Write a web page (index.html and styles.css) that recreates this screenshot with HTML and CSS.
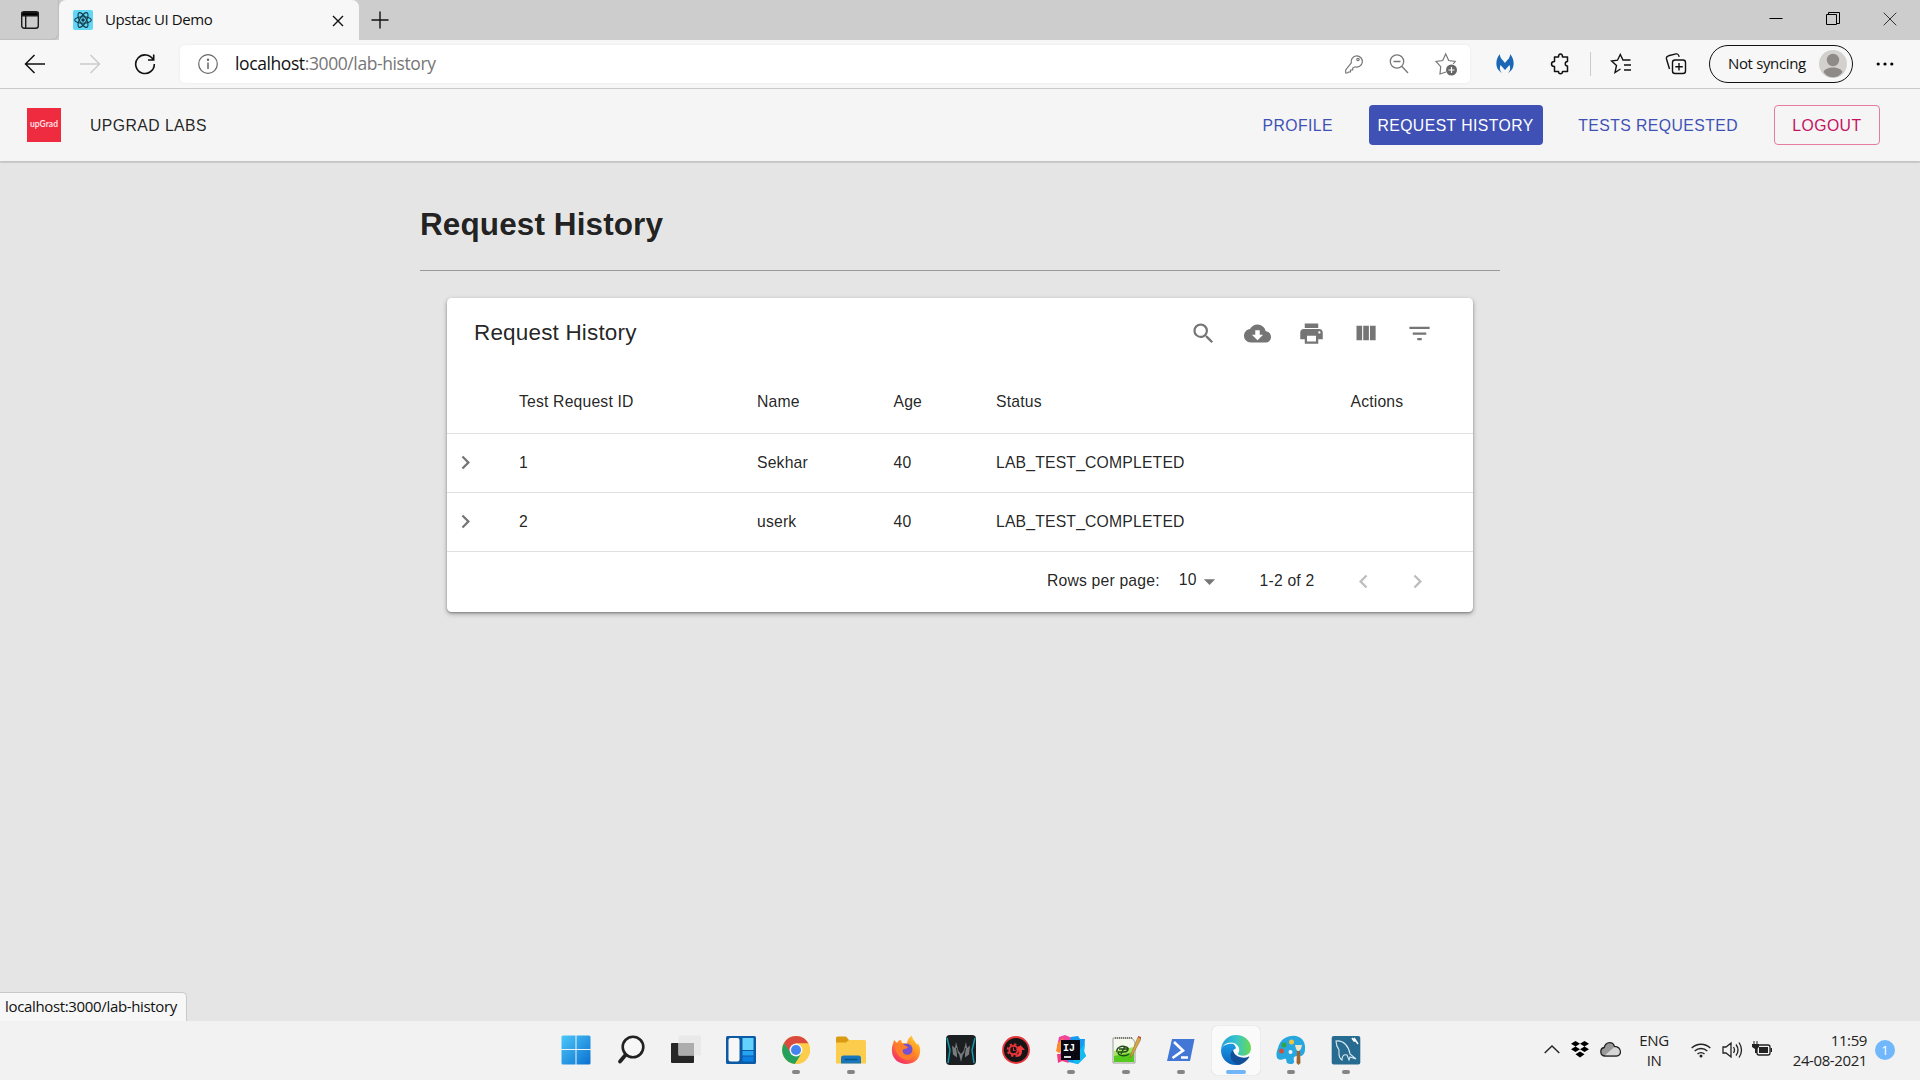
FILE: index.html
```html
<!DOCTYPE html>
<html lang="en">
<head>
<meta charset="utf-8">
<title>Upstac UI Demo</title>
<link rel="stylesheet" href="styles.css">
</head>
<body>
<div class="screen">
  <header class="tabbar">
    <div class="tab-actions"><svg width="20" height="20" viewBox="0 0 20 20" fill="none" stroke="#1b1b1b" stroke-width="1.4"><rect x="1.7" y="1.7" width="16.6" height="16.6" rx="2.5"/><path d="M2 2.5h16v3.2H2z" fill="#000"/><path d="M5.7 6v12"/></svg></div>
    <div class="tab">
      <svg class="favicon" width="20" height="20" viewBox="0 0 20 20" fill="none" stroke="#123846" stroke-width="1.1"><rect width="20" height="20" rx="2" fill="#61d6f5" stroke="none"/><ellipse cx="10" cy="10" rx="8.3" ry="3.3"/><ellipse cx="10" cy="10" rx="8.3" ry="3.3" transform="rotate(60 10 10)"/><ellipse cx="10" cy="10" rx="8.3" ry="3.3" transform="rotate(120 10 10)"/><circle cx="10" cy="10" r="1.7" fill="#123846" stroke="none"/></svg>
      <span class="tab-title">Upstac UI Demo</span>
      <svg class="tab-close" width="12" height="12" viewBox="0 0 12 12" stroke="#111" stroke-width="1.4"><path d="M1 1l10 10M11 1L1 11"/></svg>
    </div>
    <svg class="new-tab" width="18" height="18" viewBox="0 0 18 18" stroke="#111" stroke-width="1.4"><path d="M9 0.5v17M.5 9h17"/></svg>
    <div class="window-buttons">
      <svg width="14" height="14" viewBox="0 0 14 14" stroke="#000"><path d="M.5 6.500h13"/></svg>
      <svg width="14" height="14" viewBox="0 0 14 14" fill="none" stroke="#000"><path d="M.5 2.500h10v10H.5zM2.500 2.500v-2h11v11h-3"/></svg>
      <svg width="14" height="14" viewBox="0 0 14 14" stroke="#333"><path d="M.7.7l12.6 12.6M13.3.7L.7 13.3"/></svg>
    </div>
  </header>

  <div class="toolbar">
    <div class="nav-buttons">
      <svg width="22" height="20" viewBox="0 0 22 20" fill="none" stroke="#111" stroke-width="1.5"><path d="M21 10H1.5M10.5 1l-9 9 9 9"/></svg>
      <svg width="22" height="20" viewBox="0 0 22 20" fill="none" stroke="#ccc" stroke-width="1.5"><path d="M1 10h19.5M11.500 1l9 9-9 9"/></svg>
      <svg width="22" height="22" viewBox="0 0 22 22" fill="none" stroke="#111" stroke-width="1.6"><path d="M19.300 7A9.300 9.300 0 1 0 20.300 11M19.700 1.500V7h-5.700"/></svg>
    </div>
    <div class="address">
      <svg width="22" height="22" viewBox="0 0 22 22" fill="none" stroke="#666" stroke-width="1.2"><circle cx="11" cy="11" r="9.300"/><path d="M11 9.500v6.500" stroke-width="1.500"/><circle cx="11" cy="6.700" r=".6" fill="#666"/></svg>
      <span class="url"><span class="host">localhost</span>:3000/lab-history</span>
      <div class="address-icons">
        <svg width="20" height="22" viewBox="0 0 20 22" fill="none" stroke="#777" stroke-width="1.200"><path d="M7.300 9.800a5.600 5.600 0 1 1 3.600 4L8.700 15v2H6.500v2H4.500l-1 1H1.700v-3z"/><circle cx="14" cy="6.500" r="1.200"/></svg>
        <svg width="20" height="22" viewBox="0 0 20 22" fill="none" stroke="#777" stroke-width="1.300"><circle cx="8" cy="8.500" r="6.700"/><path d="M4.500 8.500h7M13 13.500l6 6.500"/></svg>
        <svg width="24" height="24" viewBox="0 0 24 24" fill="none" stroke="#777" stroke-width="1.200"><path d="M12 20l-6 2 .7-7.300L2 9.500l6.700-1L11.700 2l3 6.500 6.500 1-2 2.500"/><circle cx="17.500" cy="18" r="5.500" fill="#666" stroke="none"/><path d="M17.500 15v6M14.500 18h6" stroke="#fff"/></svg>
      </div>
    </div>
    <div class="extensions">
      <svg class="malwarebytes" width="18" height="20" viewBox="0 0 18 20" fill="#1b66b5"><path d="M4 0C3.500 4 7 6 9 9c2-3 5.500-5 5-9 4 4 5 12 1.500 16L12 19.500c2.500-3 2.500-5.500 1.500-8.500L9 16l-4.500-5c-1 3-1 5.500 1.500 8.500L2.500 16C-1 12 0 4 4 0z"/></svg>
      <svg class="puzzle" width="20" height="22" viewBox="0 0 20 22" fill="none" stroke="#111" stroke-width="1.500" stroke-linejoin="round"><path d="M4.500 4h4c0-4 4-4 4 0h5v4.500c-3 0-3 4.500 0 4.500v5.500h-5c0 3-4 3-4 0h-4v-5c-4 0-4-5 0-5z"/></svg>
      <span class="separator"></span>
      <svg class="favorites" width="22" height="22" viewBox="0 0 22 22" fill="none" stroke="#111" stroke-width="1.400"><path d="M10.500 16l-5.500 3.500 1.500-7L1.500 8l6-.8L10.300 1.500 13 7h7.500M14 12h7M14 17h7"/></svg>
      <svg class="collections" width="22" height="22" viewBox="0 0 22 22" fill="none" stroke="#111" stroke-width="1.400"><rect x="7.500" y="7" width="13" height="13.500" rx="2.500"/><path d="M14 10v7.500M10.300 13.800h7.500M4.500 16L1.500 6c-.5-2 .3-2.700 2-3.200L11 .9c2-.4 2.500.4 3.200 3"/></svg>
      <div class="profile-pill"><span>Not syncing</span><svg width="28" height="28" viewBox="0 0 28 28"><circle cx="14" cy="14" r="14" fill="#d3d1ce"/><circle cx="14" cy="10" r="6.200" fill="#8e8a87"/><path d="M4.500 22c2-6 17-6 19 0-4 7-15 7-19 0z" fill="#8e8a87"/></svg></div>
      <svg class="more" width="18" height="4" viewBox="0 0 18 4"><circle cx="2.200" cy="2" r="1.600"/><circle cx="9" cy="2" r="1.600"/><circle cx="15.800" cy="2" r="1.600"/></svg>
    </div>
  </div>

  <main class="page">
    <nav class="appbar">
      <div class="logo">upGrad</div>
      <span class="brand">UPGRAD LABS</span>
      <div class="menu">
        <a class="btn">PROFILE</a>
        <a class="btn btn-active">REQUEST HISTORY</a>
        <a class="btn">TESTS REQUESTED</a>
        <a class="btn btn-outline">LOGOUT</a>
      </div>
    </nav>
    <section class="content">
      <h1>Request History</h1>
      <div class="rule"></div>
      <div class="card">
        <div class="card-head">
          <h2>Request History</h2>
          <div class="tools">
            <svg viewBox="0 0 24 24"><path d="M15.500 14h-.79l-.28-.27A6.471 6.471 0 0 0 16 9.500 6.500 6.500 0 1 0 9.500 16c1.610 0 3.090-.59 4.230-1.570l.27.28v.79l5 4.990L20.490 19l-4.990-5zm-6 0C7.010 14 5 11.990 5 9.500S7.010 5 9.500 5 14 7.010 14 9.500 11.990 14 9.500 14z"/></svg>
            <svg viewBox="0 0 24 24"><path d="M19.350 10.040C18.670 6.590 15.640 4 12 4 9.110 4 6.600 5.640 5.350 8.040 2.340 8.360 0 10.910 0 14c0 3.310 2.690 6 6 6h13c2.760 0 5-2.240 5-5 0-2.640-2.050-4.780-4.650-4.960zM17 13l-5 5-5-5h3V9h4v4h3z"/></svg>
            <svg viewBox="0 0 24 24"><path d="M19 8H5c-1.660 0-3 1.340-3 3v6h4v4h12v-4h4v-6c0-1.660-1.340-3-3-3zm-3 11H8v-5h8v5zm3-7c-.55 0-1-.45-1-1s.45-1 1-1 1 .45 1 1-.45 1-1 1zm-1-9H6v4h12V3z"/></svg>
            <svg viewBox="0 0 24 24"><path d="M10 18h5V5h-5v13zm-6 0h5V5H4v13zM16 5v13h5V5h-5z"/></svg>
            <svg viewBox="0 0 24 24"><path d="M10 18h4v-2h-4v2zM3 6v2h18V6H3zm3 7h12v-2H6v2z"/></svg>
          </div>
        </div>
        <div class="row row-head"><span></span><span>Test Request ID</span><span>Name</span><span>Age</span><span>Status</span><span>Actions</span></div>
        <div class="row"><svg class="chevron" viewBox="0 0 24 24"><path d="M10 6L8.590 7.410 13.170 12l-4.580 4.590L10 18l6-6z"/></svg><span>1</span><span>Sekhar</span><span>40</span><span>LAB_TEST_COMPLETED</span><span></span></div>
        <div class="row"><svg class="chevron" viewBox="0 0 24 24"><path d="M10 6L8.590 7.410 13.170 12l-4.580 4.590L10 18l6-6z"/></svg><span>2</span><span>userk</span><span>40</span><span>LAB_TEST_COMPLETED</span><span></span></div>
        <div class="pager">
          <span>Rows per page:</span>
          <span class="page-size">10</span>
          <svg class="caret" viewBox="0 0 24 24"><path d="M7 10l5 5 5-5z"/></svg>
          <span class="range">1-2 of 2</span>
          <svg class="page-arrow" viewBox="0 0 24 24"><path d="M15.410 7.410L14 6l-6 6 6 6 1.410-1.410L10.830 12z"/></svg>
          <svg class="page-arrow" viewBox="0 0 24 24"><path d="M10 6L8.590 7.410 13.170 12l-4.580 4.590L10 18l6-6z"/></svg>
        </div>
      </div>
    </section>
    <div class="link-status">localhost:3000/lab-history</div>
  </main>

  <footer class="taskbar">
    <div class="apps">
      <div class="app"><svg viewBox="0 0 30 30"><defs><linearGradient id="win" gradientUnits="userSpaceOnUse" x1="0" y1="0" x2="30" y2="30"><stop offset="0" stop-color="#4cc9fa"/><stop offset="1" stop-color="#0a6fd0"/></linearGradient></defs><path fill="url(#win)" d="M2 .5h12.500V14H.5V2Q.5.5 2 .5zM15.500.5H28q1.500 0 1.500 1.500v12h-14zM.5 15h14v14.500H2Q.5 29.500.5 28zM15.500 15h14v13q0 1.500-1.500 1.500H15.500z"/></svg></div>
      <div class="app"><svg viewBox="0 0 30 30" fill="none" stroke="#222"><circle cx="17" cy="12" r="10.300" fill="#f7f7f7" stroke-width="2.600"/><path d="M9.500 20L4 26.500" stroke-width="3.800" stroke-linecap="round"/></svg></div>
      <div class="app"><svg viewBox="0 0 30 30"><rect y="8" width="23" height="20" rx="1" fill="#262626"/><rect x="7.500" y=".5" width="22.500" height="20" rx="1" fill="#e9e9e9"/><path d="M7.500 8H23v12.500H7.500z" fill="#adadad"/></svg></div>
      <div class="app"><svg viewBox="0 0 30 30"><rect y="1" width="30" height="28" rx="1.500" fill="#0c59a4"/><rect x="2.500" y="3" width="11" height="23.500" rx="2" fill="#f7f7f7"/><path d="M16.500 3h11v12h-11z" fill="#63d2fc"/><path d="M16.500 16h11v4.500h-11z" fill="#26a4f3"/><path d="M16.500 21.500h11v5h-11z" fill="#0c80e2"/></svg></div>
      <div class="app running"><svg viewBox="0 0 30 30"><circle cx="15" cy="15" r="14" fill="#fccd48"/><path d="M3 8a14 14 0 0 1 24.500.5H15L9 18.500z" fill="#db4a3e"/><path d="M3 8a14 14 0 0 0 11 21l6.500-10.500H10z" fill="#23a15d"/><path d="M15 8.500h12.300A14 14 0 0 1 14 29l7-11z" fill="#fccd48"/><circle cx="15" cy="15" r="6.500" fill="#f5f5f5"/><circle cx="15" cy="15" r="5" fill="#4384f0"/></svg></div>
      <div class="app running"><svg viewBox="0 0 30 30"><path d="M0 3q0-1.500 1.500-1.500H10L13 5v4H0z" fill="#d99b13"/><path d="M0 7.500h10L13 5h15.500Q30 5 30 6.500v22H0z" fill="#fccc4d"/><path d="M5 28.500V23q0-2.500 2.500-2.500h15Q25 20.500 25 23v5.500z" fill="#1978bd"/><path d="M8.500 24.500h13" stroke="#0b558d" stroke-width="1.500"/></svg></div>
      <div class="app"><svg viewBox="0 0 30 30"><defs><linearGradient id="fox" x1="1" y1="0" x2=".3" y2="1"><stop offset="0" stop-color="#ffdf3b"/><stop offset=".5" stop-color="#ff8d24"/><stop offset="1" stop-color="#f52d67"/></linearGradient></defs><path fill="url(#fox)" d="M2 9l1-4 3 3c1-2 2-3 4-3l1 3c2 0 4 0 5 1 0-4 2-7 5-8.500 0 4 3 5 5 9l1-1c2 3 2.500 6 2 9-1 8-7 11.500-14 11.500S1.500 24 1 17C.7 13 1 11 2 9z"/><circle cx="15.500" cy="14.500" r="6" fill="#7650ce"/><path d="M4 11c3-3 7-3 10-.5l3 1.500c-1 2-3 1.500-5 2.500-1 2 0 4 2 4.700 5 2 8-1 8-5.200 3 8-3 12-8 10.500S4 18 4 11z" fill="#ff7c2a"/></svg></div>
      <div class="app"><svg viewBox="0 0 30 30"><rect width="30" height="30" rx="4" fill="#1b1f22"/><path d="M1 3l3 12-2 13M29 3l-3 12 2 13" stroke="#139aac" stroke-width="1.500" fill="none"/><path d="M10 7l2.500 9 2.500 3 2.500-3L20 7l1 6 3-2.500-1 9-4 3v-5l-2 1.500-2 8-2-8-2-1.500v5l-4-3-1-9L9 13z" fill="#777b7e"/><path d="M10.500 13l1 6m8-6l-1 6" stroke="#222"/></svg></div>
      <div class="app"><svg viewBox="0 0 30 30"><circle cx="15" cy="15" r="13" fill="#161414" stroke="#e7363b" stroke-width="1.800"/><circle cx="12.500" cy="15" r="4.200" fill="none" stroke="#e83539" stroke-width="2"/><circle cx="12.500" cy="15" r="5.900" fill="none" stroke="#e83539" stroke-width="1.800" stroke-dasharray="2.300 2.330"/><path d="M14 22c6 0 7-2 7-7h3l-4.500-5-4.500 5h3c0 4-1 5-4 7z" fill="#ef3b3d"/><path d="M12.500 12.500v3h2" stroke="#e83539" fill="none"/></svg></div>
      <div class="app running"><svg viewBox="0 0 30 30"><path d="M3 2l6-2 7 3-4 20-10 3 3-10-4-4z" fill="#f2449d"/><path d="M2 8l5-5 2 10-6 5-3-2z" fill="#ff8b26"/><path d="M15 2l7-1 2 3 5 0-1 12 2 5-8 8-14-3z" fill="#149cf2"/><path d="M17 24l12-16-1 9 2 4-8 8-4-1z" fill="#12bbf0"/><path d="M1 19l7 0 5 9-7-2-4 2z" fill="#f33b83"/><path d="M5 5h19v20H5z" fill="#090812"/><path d="M8 22h7" stroke="#fff" stroke-width="1.700"/><text x="7" y="15.500" fill="#fff" font-family="Liberation Mono, monospace" font-weight="700" font-size="10">IJ</text></svg></div>
      <div class="app running"><svg viewBox="0 0 30 30"><path d="M2 3h19l3 4v21H2z" fill="#f5f8ed" stroke="#9aa093"/><path d="M3 16l20-4v15H3z" fill="#a3e65e"/><path d="M3 21l20-4v10H3z" fill="#55c91d"/><path d="M4 3h18" stroke="#777" stroke-width="2" stroke-dasharray="1 1"/><path d="M6 17c-1-4 4-7 9-5 4 1 2 5-2 5H7m0 0c0 4 7 5 11 2M8 14h9M14 11l-4 8" stroke="#244c18" stroke-width="1.400" fill="none"/><path d="M27 2l3 2-9 17-2 2 1-4z" fill="#dba444" stroke="#8c672b" stroke-width=".5"/><path d="M27 1l3 1v2l-3-2z" fill="#ba443e"/></svg></div>
      <div class="app running"><svg viewBox="0 0 30 30"><path d="M6 4h22.500L24 26H1z" fill="#4377d6"/><path d="M8 7l9 8.500L6.500 23M15 22.500h7" stroke="#fff" stroke-width="2.600" fill="none"/></svg></div>
      <div class="app current"><svg viewBox="0 0 24 24"><defs><linearGradient id="edgeTop"><stop stop-color="#229bdc"/><stop offset=".5" stop-color="#36c4cd"/><stop offset="1" stop-color="#69da4f"/></linearGradient><linearGradient id="edgeSide" x2="0" y2="1"><stop stop-color="#1a9be8"/><stop offset="1" stop-color="#0d63b8"/></linearGradient></defs><path fill="url(#edgeSide)" d="M8.500 7C4 7 .5 9 0 12c0 7 5 12 12 12 2 0 3-.3 4-.7C11 23 8 19 8.500 15c.2-2 1.300-3.500 3.500-4.500C11.500 8.500 10.500 7 8.500 7z"/><path fill="#124f98" d="M9.700 12C5 16 9 24 15.500 23.500c3-1 5.500-3 7-5.700.3-.5-.1-.8-.6-.5-1 .5-2.200.8-3.500.8-4.500 0-8.500-2.500-8.700-6.100z"/><path fill="url(#edgeTop)" d="M0 12C.4 5 5.500 0 12 0c7 0 12 5 12 10.300 0 4-3 6.200-6.300 6.200-2.700 0-4.200-.9-4.200-1.600 0-.6 1.100-1 1.100-3C14.600 8.600 11.500 6 8 6c-4 0-7 2.500-8 6z"/></svg></div>
      <div class="app running"><svg viewBox="0 0 30 30"><path d="M9 3C21-3 30 4 29 14c0 7-5 8-8 7-3 0-4 2-3 5s-4 4-7 2c-1-2 0-5-3-4C0 27-1 20 2 13 3 9 5 5 9 3z" fill="#28a6df"/><circle cx="15.500" cy="7" r="2.500" fill="#f4c43c"/><circle cx="8" cy="10" r="2.500" fill="#31a34b"/><circle cx="5.500" cy="16" r="2.500" fill="#c95239"/><circle cx="14.500" cy="17" r="2" fill="#f4f4f4"/><path d="M21 16h3l.5 12-2 2-2-2z" fill="#9d6532"/><path d="M19 10h7l-1 4-2 2h-1.500L20 14z" fill="#efe3c8"/></svg></div>
      <div class="app running"><svg viewBox="0 0 30 30"><rect x=".7" y="1" width="28.600" height="28.500" rx="2" fill="#286b91"/><path d="M5 6c8-1 13 6 14 13l6 5-6-2-1 3-2-5c-4-1-5 2-5 5-4-2-3-7-3-10-2-3-3-6-3-9z" fill="none" stroke="#d8e9f1" stroke-width="1.100"/><path d="M21 3l2 3h2l2 3M23 3l2 3" stroke="#fff" stroke-width="1.500" fill="none"/></svg></div>
    </div>
    <div class="tray">
      <svg width="16" height="9" viewBox="0 0 16 9" fill="none" stroke="#222" stroke-width="1.400"><path d="M.7 8L8 1l7.300 7"/></svg>
      <svg width="18" height="17" viewBox="0 0 18 17"><path d="M4.500 0L9 2.700 4.500 5.400 0 2.700zM13.500 0L18 2.700l-4.500 2.700L9 2.700zM4.500 5.600L9 8.300 4.500 11 0 8.300zM13.500 5.600L18 8.300 13.500 11 9 8.300zM9 10.500l4.500 2.700L9 16.500l-4.500-3.300z"/></svg>
      <svg width="21" height="15" viewBox="0 0 21 15"><path d="M5 14a4.300 4.300 0 0 1-.8-8.500C6-1 13-.5 14.500 4.500 22 5 22 14 16.500 14z" fill="#999" stroke="#222" stroke-width="1.300"/><path d="M5 13.300l9-8c7-.5 7 8 2.500 8z" fill="#d6d6d6"/></svg>
      <div class="lang"><span>ENG</span><span>IN</span></div>
      <svg class="wifi" width="20" height="16" viewBox="0 0 20 16" fill="none" stroke="#222" stroke-width="1.400"><path d="M.7 6a13.400 13.400 0 0 1 18.600 0M3.700 9a9.300 9.300 0 0 1 12.600 0M6.500 12a5.200 5.200 0 0 1 7 0"/><circle cx="10" cy="14" r="1.500" fill="#222" stroke="none"/></svg>
      <svg width="21" height="18" viewBox="0 0 21 18" fill="none" stroke="#222" stroke-width="1.300"><path d="M1 6h3l5-4v14l-5-4H1zM11.500 6q2 3 0 6M14 3.500q4 5.500 0 11M17 1.500q5 7.500 0 15"/></svg>
      <svg width="21" height="17" viewBox="0 0 21 17"><rect x="5" y="4" width="13" height="10" rx="2" fill="none" stroke="#222" stroke-width="1.300"/><path d="M7 6h9v6H7zM18.500 7H20v4h-1.500zM1.500 0h1v3h2V0h1v3H7v3L5 8v4H3V8L0 6V3h1.500z" fill="#222"/></svg>
      <div class="clock"><span>11:59</span><span>24-08-2021</span></div>
      <span class="badge">1</span>
    </div>
  </footer>
</div>
</body>
</html>
```
FILE: styles.css
```css
* { box-sizing: border-box; }
body { margin: 0; }
svg { display: block; flex: none; }
.screen { width: 1920px; height: 1080px; display: flex; flex-direction: column; overflow: hidden; background: #e5e5e5; font-family: "Open Sans", sans-serif; color: #111; }

.tabbar { height: 40px; flex: none; display: flex; background: #cdcdcd; }
.tab-actions { width: 59px; padding: 10px 0 0 20px; border-radius: 0 0 6px 0; box-shadow: inset -1px -1px 1px #bebebe; }
.tab { width: 300px; display: flex; align-items: center; padding: 0 15px 0 14px; background: #f7f7f7; border-radius: 7px 7px 0 0; }
.tab-title { margin: -2px 0 0 12px; font-size: 15px; letter-spacing: -.42px; white-space: nowrap; }
.tab-close { margin-left: auto; margin-top: 1px; }
.new-tab { margin: 11px 0 0 12px; }
.window-buttons { margin: 12px 23px 0 auto; display: flex; gap: 43px; }

.toolbar { height: 49px; flex: none; display: flex; align-items: center; background: #f7f7f7; border-bottom: 1px solid #ccc; }
.nav-buttons { width: 180px; display: flex; align-items: center; gap: 33px; padding-left: 24px; }
.address { width: 1290px; height: 38px; display: flex; align-items: center; padding: 0 12px 0 17px; background: #fff; border-radius: 5px; box-shadow: 0 0 3px #e9e9e9; }
.url { margin: -2px 0 0 16px; font-size: 17.500px; letter-spacing: -.4px; color: #767676; white-space: nowrap; }
.host { color: #111; }
.address-icons { margin-left: auto; display: flex; align-items: center; gap: 25px; }
.extensions { flex: 1; display: flex; align-items: center; }
.malwarebytes { margin-left: 26px; }
.puzzle { margin-left: 36px; }
.separator { width: 1px; height: 24px; margin: 0 19px 0 20px; background: #ccc; }
.collections { margin-left: 33px; }
.profile-pill { width: 144px; height: 38px; margin-left: 22px; display: flex; align-items: center; justify-content: space-between; padding: 0 5px 0 18px; border: 1.500px solid #111; border-radius: 19px; font-size: 15px; letter-spacing: -.35px; white-space: nowrap; }
.profile-pill span { margin-top: -2px; }
.more { margin-left: 23px; }

.page { flex: 1; display: flex; flex-direction: column; font-family: "Liberation Sans", Arial, sans-serif; color: rgba(0,0,0,.87); }
.appbar { height: 72px; flex: none; display: flex; align-items: center; padding: 0 40px 0 27px; background: #f5f5f5; box-shadow: 0 1px 2px rgba(0,0,0,.12), 0 2px 0 #d5d5d5; font-size: 15.750px; letter-spacing: .45px; }
.logo { width: 34px; height: 34px; background: #ef2b40; color: #ffdfe2; font: 700 8.500px/32px Lato, sans-serif; letter-spacing: 0; text-align: center; }
.brand { margin-left: 29px; padding-top: 2px; }
.menu { margin-left: auto; display: flex; gap: 27px; }
.btn { height: 40px; display: flex; align-items: center; padding: 2px 8.700px 0; border-radius: 4px; color: #3f51b5; white-space: nowrap; }
.btn-active { background: #3f51b5; color: #fff; }
.btn-outline { padding: 2px 17.500px 0; border: 1px solid #e57c9e; color: #c51162; }
.content { width: 1080px; margin: 0 auto; display: flex; flex-direction: column; }
h1 { margin: 44px 0 0; font-size: 31.500px; line-height: 38px; letter-spacing: .1px; }
.rule { height: 1px; margin-top: 27px; background: #999; }
.card { width: 1026px; height: 314px; margin: 27px 0 0 27px; border-radius: 4.500px; background: #fff; box-shadow: 0 2px 5px rgba(0,0,0,.3), 0 1px 2px rgba(0,0,0,.25); font-size: 15.750px; letter-spacing: .17px; }
.card-head { height: 72px; display: flex; align-items: center; justify-content: space-between; padding: 0 40px 2px 27px; }
h2 { margin: 0; font-size: 22.500px; font-weight: 400; letter-spacing: .17px; }
.tools { display: flex; gap: 27px; }
.tools svg { width: 27px; height: 27px; fill: #757575; }
.row { height: 59px; display: grid; grid-template-columns: 72px 238px 136.500px 102.500px 354.500px 1fr; align-items: center; border-bottom: 1px solid #e0e0e0; }
.row-head { height: 64px; }
.chevron { width: 27px; height: 27px; margin: -1px 0 0 5px; fill: #757575; }
.pager { height: 58px; display: flex; align-items: center; padding-left: 600px; }
.page-size { margin: -2px 0 0 19px; }
.caret { width: 27px; height: 27px; margin-left: -1px; fill: #757575; }
.range { width: 90px; margin-left: 37px; }
.page-arrow { width: 27px; height: 27px; margin-right: 27px; fill: #bdbdbd; }
.link-status { width: 187px; height: 29px; margin-top: auto; padding-left: 5px; background: #f7f7f7; border: solid #c9c9c9; border-width: 1px 1px 0 0; border-radius: 0 5px 0 0; font: 15px/27px "Open Sans", sans-serif; letter-spacing: -.34px; color: #111; white-space: nowrap; }

.taskbar { height: 59px; flex: none; display: flex; justify-content: space-between; background: #f2f2f2; }
.apps { display: flex; gap: 7px; padding: 5px 0 0 551.500px; }
.app { width: 48px; height: 49px; display: flex; flex-direction: column; align-items: center; padding-top: 9px; border-radius: 5px; }
.app svg { width: 30px; height: 30px; }
.running::after, .current::after { content: ""; width: 8px; height: 4px; margin-top: 5px; border-radius: 2px; background: #858585; }
.current { background: #fafafa; box-shadow: 0 0 1px #bbb; }
.current::after { width: 20px; background: #70b5fa; }
.tray { display: flex; align-items: center; padding: 0 25px 2px 0; font-size: 15px; line-height: 20px; color: #222; }
.tray > svg + svg { margin-left: 11px; }
.lang { width: 38px; margin-left: 14px; display: flex; flex-direction: column; align-items: center; letter-spacing: -.4px; }
.wifi { margin-left: 18px; }
.clock { width: 85px; margin-left: 9px; margin-right: -1px; display: flex; flex-direction: column; align-items: flex-end; letter-spacing: -.4px; }
.tray > svg:nth-last-of-type(1) { margin-left: 9px; }
.badge { width: 20px; height: 20px; margin-left: 9px; border-radius: 50%; background: #71b7fb; color: #fff; text-align: center; font-size: 13px; }
```
